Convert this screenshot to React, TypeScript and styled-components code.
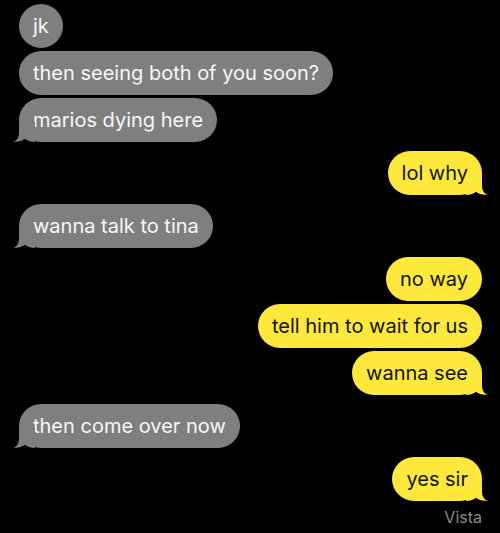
import styled, { createGlobalStyle } from "styled-components";

const GlobalStyle = createGlobalStyle`
  html, body {
    margin: 0;
    padding: 0;
    background: #000;
  }
  body {
    font-family: Inter, "Liberation Sans", Arial, sans-serif;
  }
`;

const Thread = styled.div`
  display: flex;
  flex-direction: column;
  padding: 4px 18px 0 19px;
  min-height: 533px;
  box-sizing: border-box;
  background: #000;
`;

const Group = styled.div<{ $mine?: boolean }>`
  display: flex;
  flex-direction: column;
  align-items: ${(p) => (p.$mine ? "flex-end" : "flex-start")};
  gap: 3px;
  & + & {
    margin-top: 9px;
  }
`;

const Bubble = styled.div<{ $mine?: boolean }>`
  position: relative;
  box-sizing: border-box;
  height: 44px;
  min-width: 42px;
  padding: 0 14px;
  border-radius: 22px;
  display: flex;
  align-items: center;
  justify-content: center;
  font-size: 20px;
  line-height: 26px;
  white-space: nowrap;
  background: ${(p) => (p.$mine ? "#fee83b" : "#7f7f7f")};
  color: ${(p) => (p.$mine ? "#121212" : "#f7f7f7")};
`;

const TailSvg = styled.svg<{ $mine?: boolean }>`
  position: absolute;
  bottom: 0;
  width: 22px;
  height: 20px;
  ${(p) =>
    p.$mine
      ? "right: -6px; transform: scaleX(-1);"
      : "left: -6px;"}
`;

const Status = styled.div`
  align-self: flex-end;
  margin-top: 7px;
  font-size: 16px;
  line-height: 18px;
  color: #8a8a8e;
`;

const Tail = ({ mine }: { mine?: boolean }) => (
  <TailSvg $mine={mine} viewBox="0 0 22 20">
    <path
      d="M6 0 L6 10 C6 15 4.5 18 0.5 19.6 C5 20.3 9 19 12 16.8 C15 19.2 18 20 22 20 L22 0 Z"
      fill={mine ? "#fee83b" : "#7f7f7f"}
    />
  </TailSvg>
);

type Msg = { text: string };
type Block = { mine: boolean; msgs: Msg[] };

const thread: Block[] = [
  {
    mine: false,
    msgs: [
      { text: "jk" },
      { text: "then seeing both of you soon?" },
      { text: "marios dying here" },
    ],
  },
  { mine: true, msgs: [{ text: "lol why" }] },
  { mine: false, msgs: [{ text: "wanna talk to tina" }] },
  {
    mine: true,
    msgs: [
      { text: "no way" },
      { text: "tell him to wait for us" },
      { text: "wanna see" },
    ],
  },
  { mine: false, msgs: [{ text: "then come over now" }] },
  { mine: true, msgs: [{ text: "yes sir" }] },
];

export default function App() {
  return (
    <>
      <GlobalStyle />
      <Thread>
        {thread.map((block, i) => (
          <Group key={i} $mine={block.mine}>
            {block.msgs.map((m, j) => (
              <Bubble key={j} $mine={block.mine}>
                {m.text}
                {j === block.msgs.length - 1 && <Tail mine={block.mine} />}
              </Bubble>
            ))}
          </Group>
        ))}
        <Status>Vista</Status>
      </Thread>
    </>
  );
}
